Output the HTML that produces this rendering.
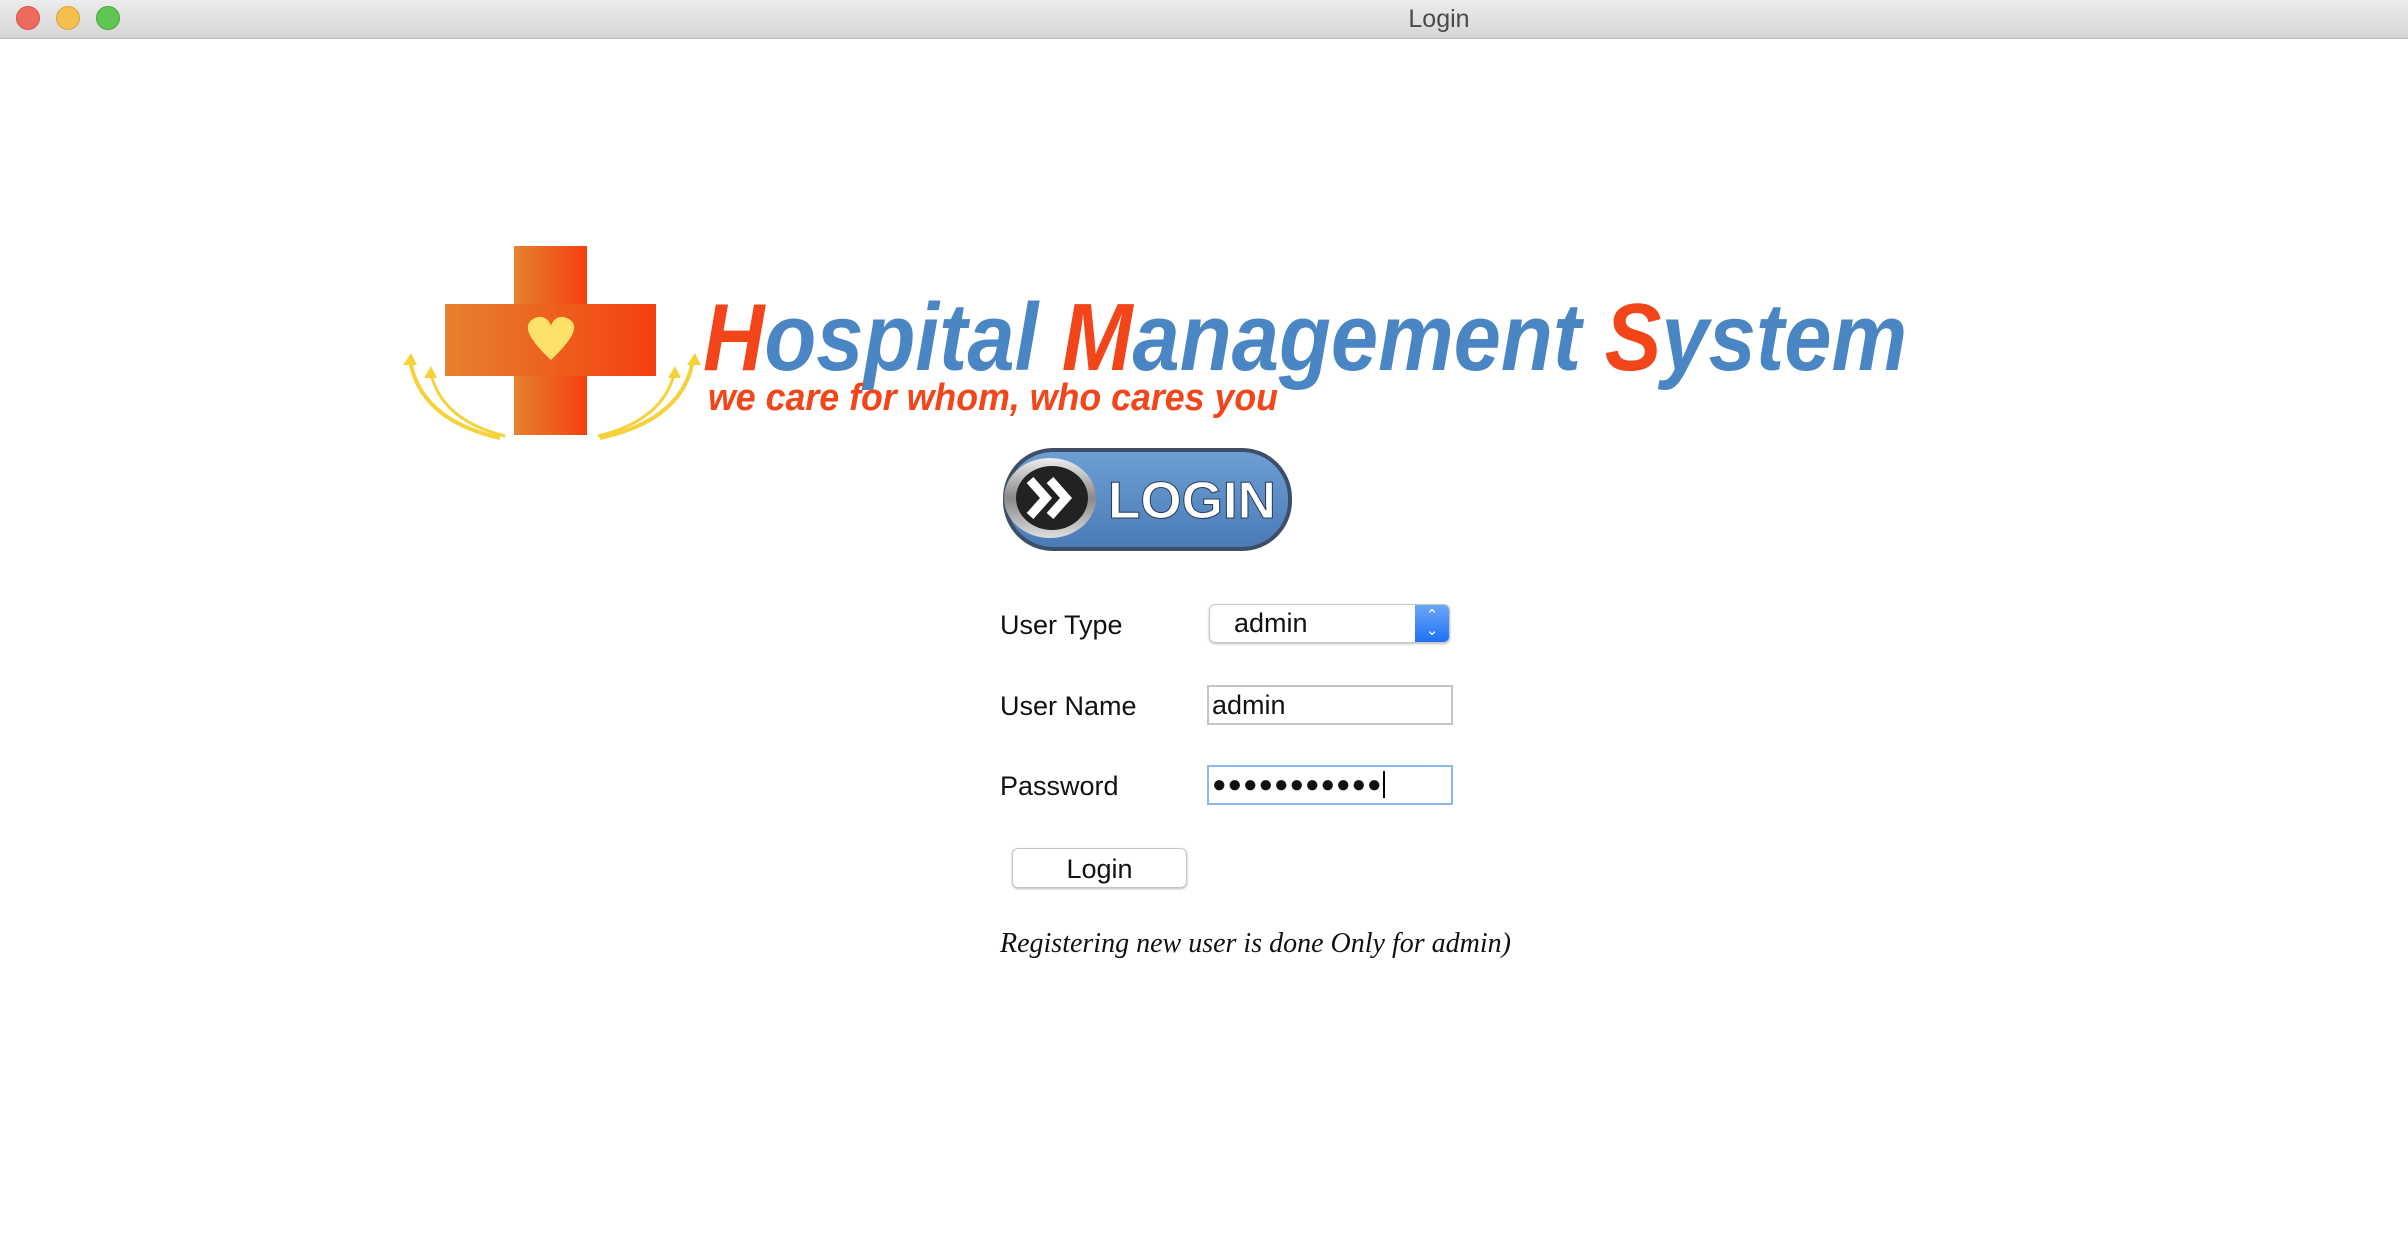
<!DOCTYPE html>
<html><head><meta charset="utf-8"><style>
*{margin:0;padding:0;box-sizing:border-box}
body{width:2408px;height:1256px;background:#fff;position:relative;overflow:hidden;font-family:"Liberation Sans","DejaVu Sans",sans-serif}
.tb{position:absolute;left:0;top:0;width:2408px;height:39px;background:linear-gradient(#ececec,#d6d6d6);border-bottom:1px solid #b8b8b8}
.dot{position:absolute;top:6px;width:24px;height:24px;border-radius:50%}
.t{position:absolute;top:5px;left:1339px;width:200px;text-align:center;font-size:25px;color:#4a4a4a}
.lbl{position:absolute;left:1000px;font-size:27px;color:#111}
.fld{position:absolute;border:2px solid #c4c4c4;background:#fff;font-size:27px;color:#111;padding-left:3px;line-height:36px}
</style></head><body>
<div class="tb">
<div class="dot" style="left:16px;background:#ed6a5e;border:1px solid #d55247"></div>
<div class="dot" style="left:56px;background:#f5bf4f;border:1px solid #d9a23a"></div>
<div class="dot" style="left:96px;background:#61c554;border:1px solid #4aa53c"></div>
<div class="t">Login</div>
</div>
<svg style="position:absolute;left:0;top:0" width="2408" height="1256">
<defs>
<linearGradient id="cr" x1="0" x2="1"><stop offset="0" stop-color="#e5822e"/><stop offset="1" stop-color="#f4400e"/></linearGradient>
<linearGradient id="bl" x1="0" y1="0" x2="0" y2="1"><stop offset="0" stop-color="#6d9ed3"/><stop offset="1" stop-color="#4a7bb7"/></linearGradient>
<linearGradient id="sv" x1="0" y1="0" x2="0" y2="1"><stop offset="0" stop-color="#eee"/><stop offset=".5" stop-color="#888"/><stop offset="1" stop-color="#ddd"/></linearGradient>
</defs>
<path d="M410 360 Q420 420 500 438" stroke="#f6d23a" stroke-width="4" fill="none"/>
<path d="M430 370 Q440 420 505 436" stroke="#f6d23a" stroke-width="3" fill="none"/>
<path d="M693 360 Q683 420 600 438" stroke="#f6d23a" stroke-width="4" fill="none"/>
<path d="M675 370 Q665 420 598 436" stroke="#f6d23a" stroke-width="3" fill="none"/>
<path d="M403 365 l8 -12 l6 12z M424 378 l7 -12 l6 12z M687 365 l8 -12 l6 12z M668 378 l7 -12 l6 12z" fill="#f6d23a"/>
<rect x="514" y="246" width="73" height="189" fill="url(#cr)"/>
<rect x="445" y="304" width="211" height="72" fill="url(#cr)"/>
<path d="M551 360 C530 340 520 325 535 318 C545 314 550 322 551 326 C552 322 557 314 567 318 C582 325 572 340 551 360z" fill="#fbe06a"/>
<text x="703" y="370" font-family="Liberation Sans" font-weight="bold" font-style="italic" font-size="96" textLength="1204" lengthAdjust="spacingAndGlyphs" fill="#4a86c4"><tspan fill="#f2461a">H</tspan>ospital <tspan fill="#f2461a">M</tspan>anagement <tspan fill="#f2461a">S</tspan>ystem</text>
<text x="708" y="410" font-family="Liberation Sans" font-weight="bold" font-style="italic" font-size="38" textLength="570" lengthAdjust="spacingAndGlyphs" fill="#f2461a">we care for whom, who cares you</text>
<rect x="1003" y="448" width="289" height="103" rx="50" fill="#3d4f66"/>
<rect x="1007" y="452" width="281" height="95" rx="46" fill="url(#bl)"/>
<ellipse cx="1050" cy="498" rx="46" ry="40" fill="url(#sv)"/>
<ellipse cx="1052" cy="498" rx="36" ry="32" fill="#222"/>
<path d="M1030 480 l16 18 l-16 18 M1050 480 l16 18 l-16 18" stroke="#fff" stroke-width="9" fill="none"/>
<text x="1108" y="518" font-family="Liberation Sans" font-weight="bold" font-size="52" textLength="168" lengthAdjust="spacingAndGlyphs" fill="#fff" stroke="#2a3e57" stroke-width="1">LOGIN</text>
</svg>
<div class="lbl" style="top:610px">User Type</div>
<div class="lbl" style="top:691px">User Name</div>
<div class="lbl" style="top:771px">Password</div>
<div style="position:absolute;left:1209px;top:604px;width:241px;height:39px;border:1px solid #c8c8c8;border-radius:6px;box-shadow:0 1px 2px #bbb;background:#fff;overflow:hidden">
<div style="position:absolute;left:24px;top:0;font-size:27px;line-height:37px;color:#111">admin</div>
<div style="position:absolute;right:0;top:0;width:34px;height:39px;background:linear-gradient(#6aa7f7,#1b6ef5);color:#fff;font-size:15px;text-align:center;line-height:15px;padding-top:3px">⌃<br>⌄</div>
</div>
<div class="fld" style="left:1207px;top:685px;width:246px;height:40px">admin</div>
<div class="fld" style="left:1207px;top:765px;width:246px;height:40px;border-color:#8cb9ec;letter-spacing:1px;font-size:24px">●●●●●●●●●●●<span style="border-left:2px solid #000;margin-left:1px"></span></div>
<div style="position:absolute;left:1012px;top:848px;width:175px;height:40px;border:1px solid #c4c4c4;border-radius:6px;box-shadow:0 1px 2px #bbb;text-align:center;font-size:27px;line-height:40px;color:#111">Login</div>
<div style="position:absolute;left:1000px;top:928px;font-family:'Liberation Serif',serif;font-style:italic;font-size:28px;color:#111;white-space:nowrap">Registering new user is done Only for admin)</div>
</body></html>
